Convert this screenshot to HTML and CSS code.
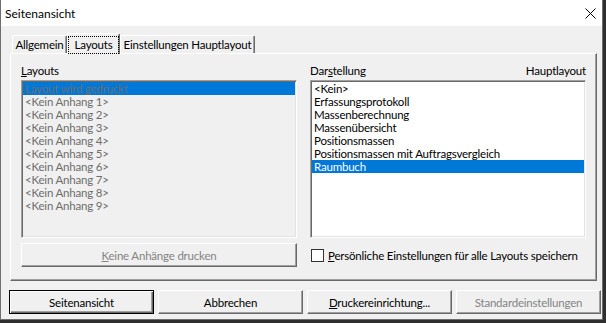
FILE: index.html
```html
<!DOCTYPE html>
<html lang="de">
<head>
    <meta charset="UTF-8">
    <title>Seitenansicht</title>
    <link rel="stylesheet" href="styles.css">
</head>
<body>

<div class="window">
    <div class="titlebar">
        <span class="title">Seitenansicht</span>
        <svg class="close" width="11" height="11" viewBox="0 0 11 11">
            <path d="M0.5 0.5 L10.5 10.5 M10.5 0.5 L0.5 10.5" stroke="#000" stroke-width="1" fill="none"/>
        </svg>
    </div>

    <div class="client">
        <div class="tabs">
            <div class="tab tab-allgemein">Allgemein</div>
            <div class="tab tab-layouts active"><span class="focus">Layouts</span></div>
            <div class="tab tab-haupt">Einstellungen Hauptlayout</div>
        </div>

        <div class="panel">
            <div class="col">
                <div class="label"><u>L</u>ayouts</div>
                <ul class="listbox disabled">
                    <li class="sel">Layout wird gedruckt</li>
                    <li>&lt;Kein Anhang 1&gt;</li>
                    <li>&lt;Kein Anhang 2&gt;</li>
                    <li>&lt;Kein Anhang 3&gt;</li>
                    <li>&lt;Kein Anhang 4&gt;</li>
                    <li>&lt;Kein Anhang 5&gt;</li>
                    <li>&lt;Kein Anhang 6&gt;</li>
                    <li>&lt;Kein Anhang 7&gt;</li>
                    <li>&lt;Kein Anhang 8&gt;</li>
                    <li>&lt;Kein Anhang 9&gt;</li>
                </ul>
                <button class="btn wide" disabled><u>K</u>eine Anhänge drucken</button>
            </div>

            <div class="col">
                <div class="label split">
                    <span>Dar<u>s</u>tellung</span>
                    <span>Hauptlayout</span>
                </div>
                <ul class="listbox">
                    <li>&lt;Kein&gt;</li>
                    <li>Erfassungsprotokoll</li>
                    <li>Massenberechnung</li>
                    <li>Massenübersicht</li>
                    <li>Positionsmassen</li>
                    <li>Positionsmassen mit Auftragsvergleich</li>
                    <li class="sel">Raumbuch</li>
                </ul>
                <label class="check">
                    <span class="box"></span>
                    <span><u>P</u>ersönliche Einstellungen für alle Layouts speichern</span>
                </label>
            </div>
        </div>

        <div class="buttons">
            <button class="btn default">Seitenansicht</button>
            <button class="btn">Abbrechen</button>
            <button class="btn"><u>D</u>ruckereinrichtung...</button>
            <button class="btn" disabled>Standardeinstellungen</button>
        </div>
    </div>
</div>

</body>
</html>
```

FILE: styles.css
```css
body {
    margin: 0;
    background-color: #2f2f2f;
    font-family: Lato, "Noto Sans", sans-serif;
    font-size: 11.5px;
    letter-spacing: -0.2px;
    color: #000;
}

.window {
    width: 603px;
    height: 320px;
    box-sizing: border-box;
    border: 1px solid #6e6e6e;
    border-top: none;
    background-color: #f0f0f0;
    display: flex;
    flex-direction: column;
}

.titlebar {
    height: 26px;
    flex: none;
    background-color: #fff;
    display: flex;
    align-items: center;
    justify-content: space-between;
    padding: 0 6px 0 4px;
}

.title {
    font-size: 12px;
    letter-spacing: 0;
}

.client {
    padding: 7px 0 0 9px;
}

/* tab strip */
.tabs {
    display: flex;
    align-items: flex-end;
    height: 20px;
    margin-left: 2px;
    position: relative;
    z-index: 1;
}

.tab {
    height: 18px;
    box-sizing: border-box;
    border: 1px solid;
    border-color: #fff #696969 transparent #fff;
    border-bottom: none;
    border-radius: 2px 2px 0 0;
    box-shadow: inset -1px 0 #a0a0a0;
    background-color: #f0f0f0;
    text-align: center;
    line-height: 17px;
    white-space: nowrap;
}

.tab-allgemein { width: 55px; }
.tab-layouts { width: 53px; }
.tab-haupt { width: 135px; }

.tab.active {
    height: 21px;
    margin-bottom: -1px;
}

.focus {
    display: block;
    margin: 2px 0 0 0;
    height: 18px;
    box-sizing: border-box;
    border: 1px dotted #000;
    line-height: 15px;
}

/* page of the tab control */
.panel {
    width: 587px;
    height: 228px;
    box-sizing: border-box;
    border: 1px solid;
    border-color: #fff #696969 #696969 #fff;
    box-shadow: inset -1px -1px #a0a0a0;
    padding: 10px 10px 0 10px;
    display: flex;
    gap: 13px;
}

.col {
    width: 276px;
    display: flex;
    flex-direction: column;
}

.label {
    height: 13px;
    line-height: 13px;
    margin-bottom: 3px;
}

.label.split {
    display: flex;
    justify-content: space-between;
}

.listbox {
    list-style: none;
    margin: 0;
    height: 158px;
    box-sizing: border-box;
    padding: 1px;
    border: 1px solid;
    border-color: #a0a0a0 #fff #fff #a0a0a0;
    box-shadow: inset 1px 1px #696969, inset -1px -1px #e3e3e3;
    background-color: #fff;
    overflow: hidden;
}

.listbox li {
    height: 13px;
    line-height: 13px;
    padding-left: 2px;
    white-space: nowrap;
}

.listbox .sel {
    background-color: #0078d7;
    color: #fff;
}

.listbox.disabled {
    background-color: #f0f0f0;
    color: #6d6d6d;
}

.listbox.disabled .sel {
    color: #6d6d6d;
}

/* buttons */
.btn {
    font: inherit;
    letter-spacing: inherit;
    color: #000;
    height: 24px;
    width: 145px;
    padding: 0;
    background-color: #f0f0f0;
    border: 1px solid;
    border-color: #fff #696969 #696969 #fff;
    box-shadow: inset -1px -1px #a0a0a0;
}

.btn:disabled {
    color: #838383;
}

.btn.default {
    border-color: #000;
    box-shadow: inset 1px 1px #fff, inset -1px -1px #696969, inset -2px -2px #a0a0a0;
}

.btn.wide {
    width: 100%;
    margin-top: 5px;
}

.check {
    display: flex;
    align-items: center;
    gap: 4px;
    height: 24px;
    margin-top: 5px;
    padding-left: 1px;
    white-space: nowrap;
}

.check .box {
    flex: none;
    width: 13px;
    height: 13px;
    box-sizing: border-box;
    border: 1px solid #333;
    background-color: #fff;
}

.buttons {
    display: flex;
    gap: 4px;
    margin: 9px 0 0 -1px;
}
```
